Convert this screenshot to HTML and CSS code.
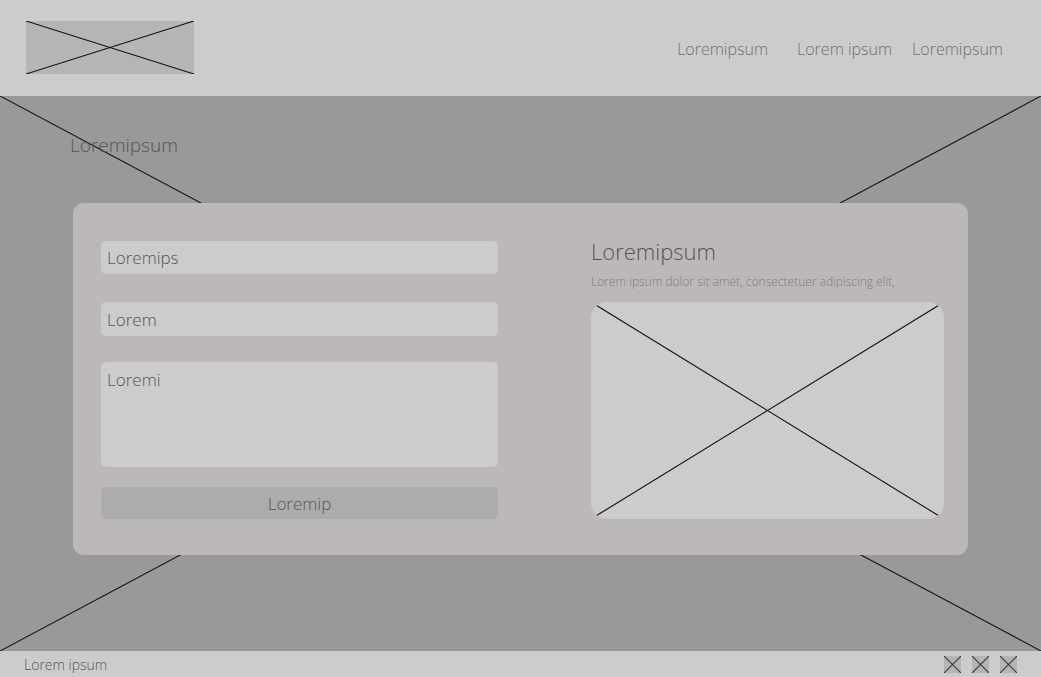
FILE: index.html
```html
<!DOCTYPE html>
<html lang="en">
<head>
<meta charset="utf-8">
<title>Wireframe</title>
<link rel="stylesheet" href="styles.css">
</head>
<body>
<header class="header">
  <div class="logo">
    <svg class="xsvg" viewBox="0 0 100 100" preserveAspectRatio="none"><line x1="0" y1="0" x2="100" y2="100"/><line x1="100" y1="0" x2="0" y2="100"/></svg>
  </div>
  <nav class="nav">
    <a class="nav-item nav-1">Loremipsum</a>
    <a class="nav-item nav-2">Lorem ipsum</a>
    <a class="nav-item nav-3">Loremipsum</a>
  </nav>
</header>
<main class="hero">
  <svg class="hero-bg xsvg" viewBox="0 0 100 100" preserveAspectRatio="none"><line x1="0" y1="0" x2="100" y2="100"/><line x1="100" y1="0" x2="0" y2="100"/></svg>
  <h1 class="hero-title">Loremipsum</h1>
  <section class="card">
    <div class="form">
      <div class="field field-1">Loremips</div>
      <div class="field field-2">Lorem</div>
      <div class="field area">Loremi</div>
      <div class="button">Loremip</div>
    </div>
    <div class="info">
      <h2 class="info-title">Loremipsum</h2>
      <p class="info-text">Lorem ipsum dolor sit amet, consectetuer adipiscing elit,</p>
      <div class="picture">
        <svg class="xsvg" viewBox="0 0 100 100" preserveAspectRatio="none"><line x1="0" y1="0" x2="100" y2="100"/><line x1="100" y1="0" x2="0" y2="100"/></svg>
      </div>
    </div>
  </section>
</main>
<footer class="footer">
  <span class="footer-text">Lorem ipsum</span>
  <div class="icons">
    <span class="icon"><svg class="xsvg" viewBox="0 0 100 100" preserveAspectRatio="none"><line x1="0" y1="0" x2="100" y2="100"/><line x1="100" y1="0" x2="0" y2="100"/></svg></span>
    <span class="icon"><svg class="xsvg" viewBox="0 0 100 100" preserveAspectRatio="none"><line x1="0" y1="0" x2="100" y2="100"/><line x1="100" y1="0" x2="0" y2="100"/></svg></span>
    <span class="icon"><svg class="xsvg" viewBox="0 0 100 100" preserveAspectRatio="none"><line x1="0" y1="0" x2="100" y2="100"/><line x1="100" y1="0" x2="0" y2="100"/></svg></span>
  </div>
</footer>
</body>
</html>
```
FILE: styles.css
```css
* { box-sizing: border-box; }
html, body { margin: 0; padding: 0; }
body {
  width: 1041px;
  height: 677px;
  overflow: hidden;
  font-family: "Open Sans", "Liberation Sans", sans-serif;
  color: #666;
  background: #999;
}
.xsvg { display: block; width: 100%; height: 100%; }
.xsvg line { stroke: #111; stroke-width: 1.1; vector-effect: non-scaling-stroke; }

.header {
  height: 96px;
  background: #cccccc;
  display: flex;
  align-items: center;
  padding: 0 38px 0 26px;
}
.logo {
  width: 168px;
  height: 53px;
  margin-top: -1px;
  background: #b6b4b4;
}
.nav { margin-left: auto; display: flex; align-items: center; }
.nav-item {
  font-size: 16px;
  font-weight: 300;
  color: #6f6f6f;
  line-height: 24px;
  margin-top: 2px;
}
.nav-2 { margin-left: 29px; }
.nav-3 { margin-left: 20px; }

.hero {
  position: relative;
  height: 555px;
  background: #999999;
  padding-top: 37px;
  overflow: hidden;
}
.hero-bg {
  position: absolute;
  inset: 0;
  z-index: 0;
}
.hero-title {
  position: relative;
  margin: 0 0 46px 70px;
  font-size: 19px;
  font-weight: 300;
  line-height: 24px;
  color: #555;
}
.card {
  position: relative;
  z-index: 1;
  width: 895px;
  height: 352px;
  margin: 0 auto;
  background: #bcb8b7;
  border-radius: 11px;
  padding: 38px 24px 36px 28px;
  display: grid;
  grid-template-columns: 397px 353px;
  column-gap: 93px;
}
.form { display: flex; flex-direction: column; }
.field {
  background: #cccccc;
  border-radius: 5px;
  font-size: 17px;
  font-weight: 300;
  color: #555;
  padding: 0 6px;
  display: flex;
  align-items: center;
}
.field-1 { height: 33px; }
.field-2 { height: 34px; margin-top: 28px; }
.area {
  height: 105px;
  margin-top: 26px;
  align-items: flex-start;
  padding-top: 6px;
  line-height: 24px;
}
.button {
  height: 32px;
  margin-top: 20px;
  background: #acacac;
  border-radius: 5px;
  font-size: 17px;
  font-weight: 300;
  color: #555;
  display: flex;
  align-items: center;
  justify-content: center;
}
.info { display: flex; flex-direction: column; }
.info-title {
  margin: -2px 0 0;
  font-size: 22px;
  font-weight: 300;
  line-height: 25px;
  color: #555;
}
.info-text {
  margin: 10px 0 0;
  font-size: 12px;
  font-weight: 300;
  line-height: 16px;
  color: #7d7d7d;
}
.picture {
  margin-top: 12px;
  height: 217px;
  background: #cccccc;
  border-radius: 16px;
  overflow: hidden;
}

.footer {
  height: 26px;
  background: #cccccc;
  display: flex;
  align-items: center;
  padding: 0 24px;
}
.footer-text { font-size: 14px; font-weight: 300; color: #555; }
.icons { margin-left: auto; display: flex; gap: 11px; }
.icon {
  display: block;
  width: 17px;
  height: 17px;
  background: #b5b5b5;
}
.icon .xsvg line { stroke: #333; }
```
